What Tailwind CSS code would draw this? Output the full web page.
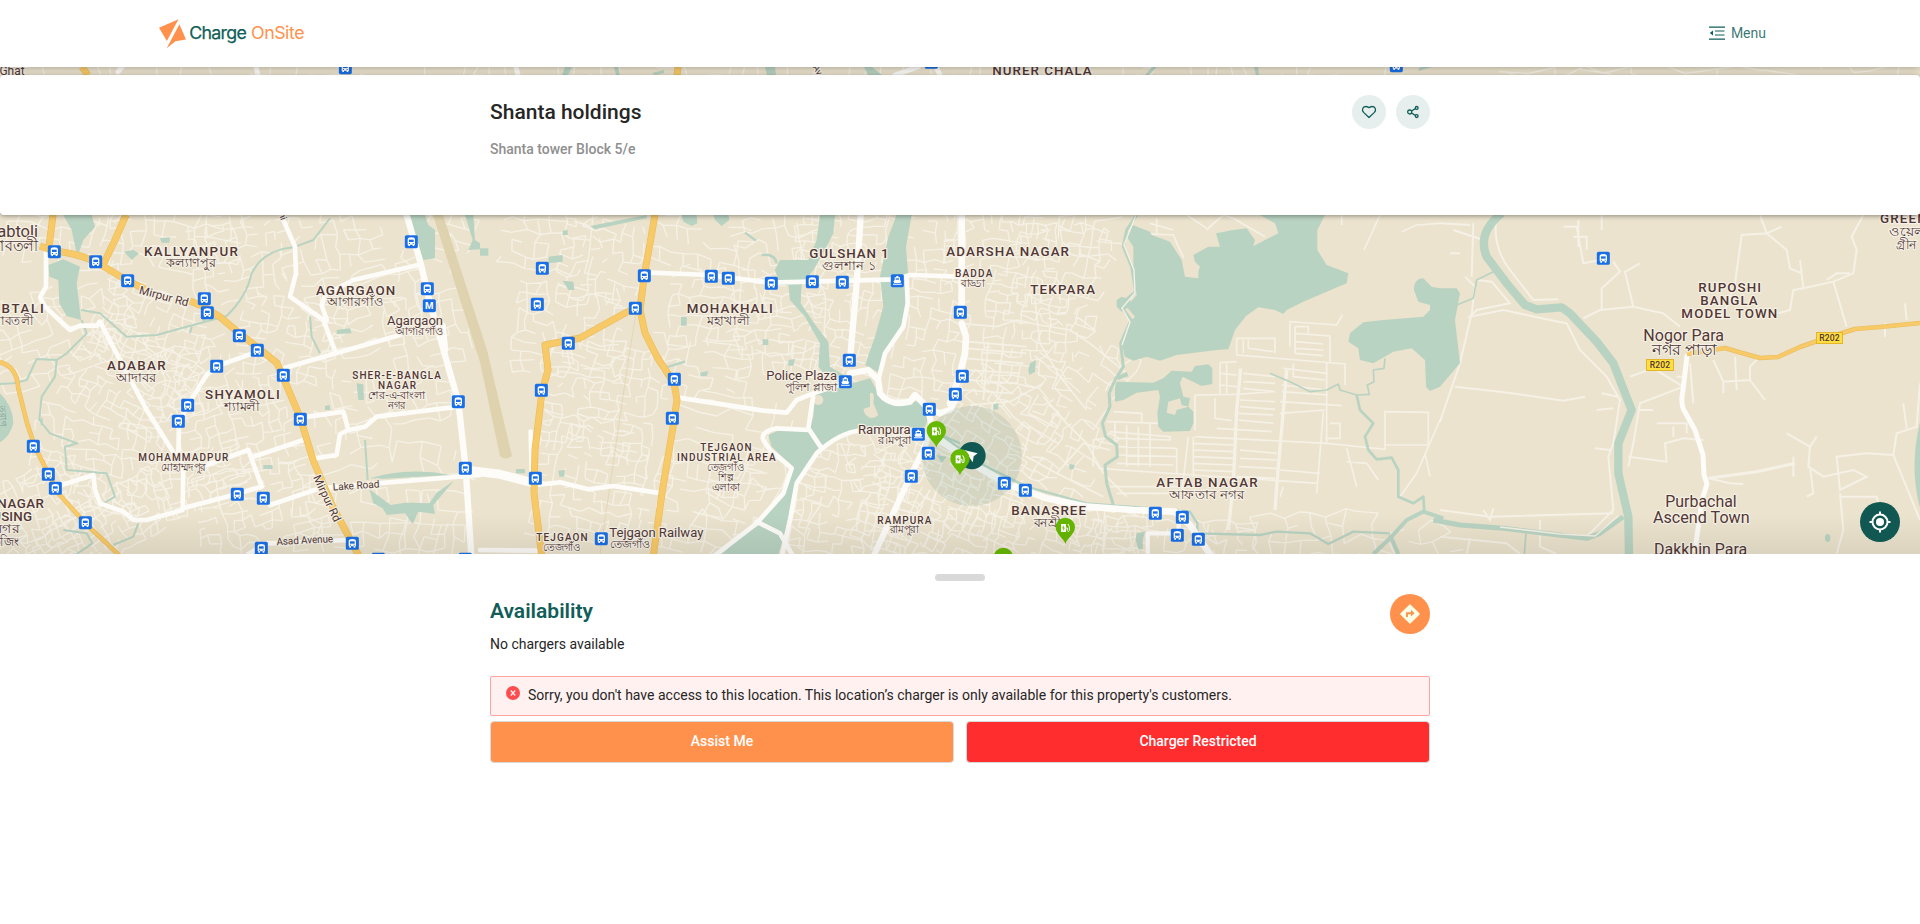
<!DOCTYPE html>
<html lang="en">
<head>
<meta charset="utf-8">
<title>Charge OnSite</title>
<script src="https://cdn.jsdelivr.net/npm/@tailwindcss/browser@4"></script>
</head>
<body class="flex h-screen flex-col overflow-hidden bg-white font-['Roboto',sans-serif] text-sm text-[#262626]">

<header class="relative z-20 flex h-[67px] shrink-0 items-center justify-between bg-white pr-[154px] pb-0.5 pl-[159px] shadow-[0_1px_8px_rgba(0,0,0,0.3)]">
  <svg class="h-8 w-[150px]" viewBox="0 0 150 32">
    <path d="M0 10.7 19.5 2.200 7.900 24Z M20.400 7.200 27 22.600 16.500 24.200 7.700 31.200Z" fill="#ff914d"/>
    <g font-family="Inter,sans-serif" font-size="17.8">
      <text x="30.3" y="21.8" textLength="57.5" fill="#115e59" stroke="#115e59" stroke-width=".25">Charge</text>
      <text x="92" y="21.8" textLength="53.5" fill="#ff914d">OnSite</text>
    </g>
  </svg>
  <nav class="flex items-center gap-[6px] text-[#115e59]">
    <svg class="h-4 w-4" viewBox="0 0 16 16" fill="none" stroke="currentColor" stroke-width="1.2"><path d="M0 2.200h16M6 6h9.500M6 10h9.500M0 14.200h16"/><path d="M4 5.500v5L.8 8Z" fill="currentColor" stroke="none"/></svg>
    <span class="text-sm text-[#115e59]/85">Menu</span>
  </nav>
</header>

<main class="relative h-[487px] shrink-0 overflow-hidden bg-[#ebe3cd] pt-2">
  <svg class="absolute inset-0 h-[487px] w-[1920px]" viewBox="0 67 1920 487" font-family="Roboto,'Noto Sans',sans-serif">
    <defs>
      <g id="box"><rect x="-19.5" y="-19.5" width="39" height="39" rx="5" fill="#1a6fe6"/></g>
      <g id="bus"><use href="#box"/><path d="M-11 -6Q-11 -13 0 -13Q11 -13 11 -6V9H9V13H4V9H-4V13H-9V9H-11Z" fill="#fff"/><path d="M-7 -6H7V1H-7Z" fill="#1a6fe6"/><path d="M-7 4h3v3h-3zM4 4h3v3h-3z" fill="#1a6fe6"/></g>
      <g id="boat"><use href="#box"/><path d="M-3 -14H3V-10H8V-1L12 1L9 7H-9L-12 1L-8 -1V-10H-3ZM-13 9H13V12H-13Z" fill="#fff"/><path d="M-5 -7H5V-3H-5Z" fill="#1a6fe6"/></g>
      <g id="pin"><path d="M0 0C-5 -17 -29 -30 -29 -50A29 29 0 0 1 29 -50C29 -30 5 -17 0 0Z" fill="#66b800"/><path d="M-13 -60H2V-36H-13Z" fill="#fff"/><path d="M2 -48H6V-40Q9 -34 12 -40V-52L8 -60" fill="none" stroke="#fff" stroke-width="3"/><path d="M-4 -56l-6 9h4l-1 7 6-9h-4z" fill="#66b800"/></g>
      <linearGradient id="fade" x1="0" x2="0" y1="0" y2="1"><stop offset="0" stop-color="#000" stop-opacity="0"/><stop offset="1" stop-color="#000" stop-opacity=".07"/></linearGradient>
    </defs>

    <path id="streets" fill="none" stroke="#f5f1e6" stroke-width="1.35" stroke-linejoin="round"/>
    <g fill="none" stroke="#f5f1e6" stroke-width="5" transform="translate(960 210) scale(.33333)">
      <path d="M830 385H945V430M830 385V435L1155 462V525M850 390V430M865 390V415L940 425M990 410V335L1130 345L1147 315M1005 350H1045V370M1005 370L1110 378V455M1005 350V430M1005 395L1090 402M1005 415L1090 420M1005 430L1090 437M780 458L830 455M780 458V550M800 460V550M705 555L830 553L940 545M780 490L830 495M780 525L830 530M850 490L945 500M850 515L945 520M850 535L945 545M1000 460V500L1095 510M970 475L1100 490M965 525L1100 540M965 545L1105 555M960 575L1145 587M960 610L1095 600M1100 455V700M1090 605L1070 850M1110 640H1140V685H1095M840 570L945 575M840 590L945 598M835 610L940 615M835 630L940 640M770 655L935 665M705 680L1100 700L1275 718V605L1405 607V705H1275M705 555V660M765 565V625L815 632M700 700L820 705M700 720L820 725M700 740L820 745M700 760L820 765M700 780L820 785M700 680V800M840 720L950 730M840 745L950 750M835 770L950 775M830 800L945 805M460 605L545 610V635M440 635L600 640M450 665L630 680V690L470 685M475 710L650 715M475 735L650 740M470 760L640 765M465 640V700M500 645V770M535 650V770M570 640V770M415 775L700 795L1075 820M650 715V790M685 680L665 850M1160 715L1190 830M1160 755L1220 760L1255 810M1440 630L1370 790L1320 860M1395 730L1410 800M440 800L500 860M450 830H700M470 850H690M970 830L960 860M960 780L1080 790"/>
      <path stroke-width="10" d="M842 475L830 600L820 820L805 960M980 480L970 600L950 830L945 900"/>
      <path d="M20 395L200 410M20 415L200 430M20 445L190 460M20 480L180 490M20 510L170 520M10 540L160 550M85 395L70 570M130 400L110 560M0 340L110 350L170 330L240 345M30 585L150 575L250 520M225 270L240 400L300 500L380 600M240 345L330 360L390 400L500 490M120 570L160 620L210 660L190 740M250 560L320 640L380 700L430 790M200 740L290 790L430 860M290 790L370 700L450 720M430 685L400 690V770M740 60Q760 40 790 15L820 25L915 80M1145 15V45M1260 15L1212 120M1325 65L1370 45L1440 40"/>
      <path d="M535 70L640 75L655 110L672 145M570 40L640 60M590 25V70M680 15L740 55"/>
    </g>
    <g fill="none" stroke="#f5f1e6" stroke-width="6" transform="translate(1440 210) scale(.33333)">
      <path d="M170 15Q155 110 210 180L280 270L355 268M75 200L105 230L95 310L60 460L0 635M45 530L180 545L370 572L435 560M110 210L155 215L210 280L110 300L90 320L190 300L330 330L380 340L420 420L500 500L540 570L520 700L505 740L520 900L440 980L300 965L180 950M0 900L150 920L520 910M470 600L520 595M465 715L510 720M485 550L535 560M370 50H410L430 160L480 150M400 80H440V120M415 30V110M485 15V60M520 155L540 185L485 235V300M600 160L555 185L580 290L480 300L430 325M580 290L670 310L720 350M570 500L640 475L730 530L600 580L580 700L565 770M600 600H640M650 640H740V670M565 740L680 755L675 700L730 685L790 690M700 650V680M750 460L760 580M710 500H740M960 15L980 70L905 75L885 220L845 330M980 70L1040 120L1050 175L1085 190L1090 235L1060 240L1050 300L1015 310M980 70L1025 50M1090 235L1180 215L1240 190L1250 120L1235 80L1270 15M1180 215L1220 350M1160 210L1190 190H1230M1080 150L1085 190M820 450L850 515L930 510L930 470L960 440M850 515V550M885 440L890 540M930 510L975 570M1395 280L1400 330M1335 340V380M1040 670L1110 710L1130 680M1110 710L1105 770L1150 800L1240 780L1280 800L1200 840L1190 740L1280 730L1360 735L1440 930M1360 735L1370 670L1430 650L1440 520M1390 580L1400 655M1200 850L1210 960L1190 1032M1110 770L1120 850L1100 860M1200 860L1310 860L1340 980M805 805L870 820L910 822M1060 740V800"/>
      <path stroke-width="9" d="M805 805L950 785L1065 760"/>
      <path d="M0 40L90 45M40 60L130 90M100 40L95 200M30 130H60M0 980L200 1000L240 1032M130 900L150 930L160 895M90 985L80 1032M300 930V1010L350 1032"/>
    </g>

    <!-- runway and rail line -->
    <path d="M433 215H443L487 350L512 456Q505 461 500 456L480 362Z" fill="#dfd2ae"/>
    <path d="M652 215L628 362L600 554" fill="none" stroke="#dfd2ae" stroke-opacity=".7"/>

    <g fill="#b9d3c2" stroke="none">
      <g transform="translate(0 210) scale(.33333)">
        <path d="M190 15H275L285 50L250 90L232 140L215 60ZM145 165L190 148L240 170L230 220L243 330L200 318L178 280L175 210L148 200ZM372 125L400 120L417 130L395 150ZM480 85L510 82L508 98H485ZM1225 15H1275L1285 45L1305 60V145L1270 150L1250 90ZM1395 15H1420L1425 90L1440 100V118L1405 120L1418 90ZM0 550Q40 590 40 640Q30 680 0 697ZM1070 520L1090 523L1092 570H1075ZM1110 805Q1220 770 1352 795L1150 806ZM1108 838L1172 885L1215 878H1240L1288 880L1310 848L1362 812L1300 885L1305 912L1255 905L1238 942L1215 910L1160 915L1148 895L1120 880ZM790 765H818V777H790ZM1010 360L1050 355L1055 370L1010 372ZM975 588L990 585V600H975ZM600 320L625 325L610 335Z"/>
        <g fill="none" stroke="#b9d3c2" stroke-width="6" stroke-linejoin="round">
          <path d="M243 300L300 310L340 345L380 380L470 375L560 350L680 318Q740 260 755 190Q790 120 880 112L940 90L990 25M245 330L260 370L200 430L170 450L110 447L80 510L40 520L0 522M170 450L165 500L125 560L118 630L150 670L232 700L195 710L200 780L320 790L345 860L310 880M930 320L935 380L960 430M415 940L400 980L340 1005M190 960L260 970L277 1000L230 1032M1095 690L1103 810M575 350L570 370M125 625V645"/>
        </g>
      </g>
      <g transform="translate(480 210) scale(.33333)">
        <path d="M1020 15H1065L1060 70L1035 120L1000 180L965 225L962 280L1010 350L1045 395L1050 470L1100 500L1040 500L1015 470L1020 400L975 320L930 270L925 225H900L885 180L900 150L985 150L1010 90ZM1250 15H1295L1278 110L1285 200L1280 320L1230 400L1200 490L1155 465L1185 380L1210 290L1200 200L1225 80Z"/>
        <path d="M1005 550L1100 525L1170 505L1190 540L1230 580L1290 580L1320 570L1350 610L1335 650L1110 660L1030 710L965 800L940 860L915 970L895 1032H725L830 935L900 860L940 770L875 710L865 675L900 660L985 665L1000 620Z"/>
        <path d="M605 15H650L652 40L635 48L610 35ZM700 15H745L748 30L725 48L705 30ZM205 140L248 135V155L205 160ZM248 212L280 215L283 240H265ZM0 115H25V137H0ZM248 62L263 60V75H248ZM603 320H620V347H603ZM848 388H865V405H848ZM660 488L685 483L680 498H662ZM925 450L945 447L940 467H925ZM108 777H135V790H108ZM235 782L255 780L252 800H238ZM1370 735L1400 740L1385 758ZM330 48L500 15V25L345 58Z"/>
        <path d="M845 135Q885 130 890 160M795 68L828 92M558 472L615 455M1350 660L1440 700" fill="none" stroke="#b9d3c2" stroke-width="7"/>
        <path d="M1170 550Q1185 540 1180 580L1195 615Q1175 635 1155 612L1150 597L1170 590Z" fill="#ebe3cd"/>
        <circle cx="1015" cy="570" r="15" fill="#ebe3cd"/>
      </g>
      <g transform="translate(960 210) scale(.33333)">
        <path d="M518 45L570 65L575 75L630 95L665 150L675 200L715 205L715 185L720 170L705 155L700 135L745 110L780 110L768 70L820 60L860 55L885 90L880 108L955 70L945 40L900 15H1095L1072 60V120L1100 165L1165 190L1160 220L1030 275L980 300L970 312L945 300L895 292L858 318L825 360L805 418L770 420L650 435L600 452L560 440L520 452L495 440L485 400L505 340L525 320L500 290L530 255L520 180L520 110L500 80Z"/>
        <path d="M470 270L485 260L510 268L515 285L485 305L470 290ZM465 530L470 515L580 518L610 505L635 482L695 485L705 468L745 463L757 475V522L725 528L668 500L660 520L670 560L690 565L685 590L700 605V640L690 663L610 665L595 650L592 610L600 560L595 540L530 548L490 570L465 575ZM470 500L500 485L505 498L475 510Z"/>
        <path d="M625 575L660 565L665 585L685 590L650 600L645 615L620 608Z" fill="#ebe3cd"/>
        <path d="M1362 240Q1362 205 1390 205L1415 230L1440 235H1490L1500 250L1485 330L1500 460L1440 530L1410 543L1398 530L1395 450L1355 415L1300 425L1240 460L1200 450L1195 415L1165 395L1170 370L1210 337L1270 330L1390 320L1410 300V285L1375 275Z"/>
        <path d="M205 480L210 460L228 450L225 485L208 495ZM100 583L115 580V598L100 600ZM328 762L345 765L340 778H328ZM530 970L555 965L548 990V1018H535L527 990Z"/>
        <g fill="none" stroke="#b9d3c2" stroke-linejoin="round">
          <path stroke-width="9" d="M530 15L500 60L490 110L515 170L527 245L480 285L513 330L482 400L490 470L465 510L447 550L450 590L427 640L437 680L470 705L472 740L435 765L440 820L460 885"/>
          <path stroke-width="7" d="M-70 665L60 760L200 830L380 880L640 900L690 905L712 940V970L900 975L950 965L1050 970L1105 1002L1180 965L1290 970"/>
          <path stroke-width="12" d="M1240 1032L1290 985L1340 930L1390 905L1450 925M1290 975L1315 1032"/>
          <path stroke-width="8" d="M1190 555L1200 600L1240 640L1215 680L1225 720L1250 748L1295 743L1315 780L1315 860L1360 880L1390 860L1393 905"/>
          <path stroke-width="5" d="M1275 445L1272 475L1240 480L1242 515L1222 525L1228 553L1190 555L1140 540L1135 522L1100 540L1050 545L990 515L930 490"/>
        </g>
      </g>
      <g transform="translate(1440 210) scale(.33333)" fill="none" stroke="#b9d3c2" stroke-linejoin="round">
        <path stroke-width="25" d="M185 10Q110 70 140 140L200 220L255 285L290 298L365 292L390 310L470 395L520 460L575 600L535 700V790L565 920L567 1040"/>
        <path stroke-width="15" d="M-20 930L60 945L190 955L300 968L440 985L480 970L550 920"/>
        <path stroke-width="5" d="M160 185L110 210L100 265L50 285M258 970L253 1032"/>
        <path d="M1440 640Q1420 720 1425 800Q1430 870 1450 920Z" fill="#b9d3c2"/><ellipse cx="1163" cy="984" rx="8" ry="12" fill="#b9d3c2" stroke="none"/>
      </g>
      <path d="M565 67L572 67L568 75H562ZM614 67H618L620 75H616ZM652 73L664 70V73L655 75ZM765 67H775L776 75H767ZM864 67H872L882 75H868ZM1152 67H1157L1149 75H1145ZM1254 67H1258L1259 75H1256ZM1420 67H1432L1418 71Z"/>
    </g>
    <g stroke="#f5f1e6" fill="none" stroke-width="1.4"><path d="M1136 215L1124 245L1134 270L1135 293L1122 308L1130 322L1122 345M1500 527L1560 534L1595 536L1618 516"/></g>

    <!-- arterial roads -->
    <g fill="none" stroke="#fdfcf8" stroke-linejoin="round" stroke-linecap="round">
      <g transform="translate(0 210) scale(.33333)" stroke-width="14">
        <path d="M848 25L885 110L888 190L870 260L970 330L1008 430M1255 165L1060 210L975 255L965 285L980 330M850 475L1008 430L1200 375M138 120V230L120 262L135 290L210 360L240 347L290 347L300 335L360 450L440 600L525 735M765 428L660 465L620 495L560 590L537 640L535 740L550 770L548 900L440 930L400 930L370 905L300 880L285 840L280 795L185 825M548 895L680 860L785 830L745 720L620 765M760 740L910 690M910 622L1030 605L1045 660L1020 672L1010 735L945 745M1045 660L1095 650L1130 620L1375 590M810 885L960 835L1130 820L1440 795M745 1032L800 1000L1050 990M1330 345L1338 420"/>
        <path stroke-width="19" d="M1220 15L1262 160L1290 280L1325 400L1375 575L1397 775L1414 1040"/>
      </g>
      <g transform="translate(480 210) scale(.33333)" stroke-width="14">
        <path stroke-width="27" d="M-45 780L60 793L165 820"/>
        <path d="M165 825L240 817L325 838L400 828L545 850L535 890M152 665L155 780M510 188L690 195L870 218L1250 208L1290 195L1440 200M1195 510L1215 430L1270 350L1283 280L1280 205M595 563L850 602L920 608L950 570L1000 550L1090 520M1000 555L985 655L1025 715M985 660L890 655Q840 665 850 690L870 720L935 775L910 850L830 940L700 1040M1150 660Q1080 665 1010 730L950 820L930 930L905 1040M830 935L900 970L940 1040M0 1020L180 1022"/>
        <path stroke-width="19" d="M1142 15L1130 220L1110 450M1110 490L1165 480L1195 510L1200 550Q1230 590 1290 575L1305 555L1345 595L1380 610L1410 600L1440 540"/>
        <path stroke-width="18" d="M1345 600L1355 650L1330 720L1290 800L1180 1040"/>
      </g>
      <g transform="translate(960 210) scale(.33333)" stroke-width="20">
        <path d="M5 15V300M5 340L18 380L15 430L0 490L-30 580"/>
        <path d="M-90 660L-60 690L60 775L150 825L260 865L380 890L520 900L645 905L690 945L755 1040"/>
        <path stroke-width="13" d="M563 1040V970H640M660 905L655 960"/>
      </g>
      <path stroke-width="5" d="M1687 356L1683 390Q1680 405 1685 412L1695 430L1703 455L1704 475L1707 484L1702 500L1695 550"/>
      <path stroke-width="5" d="M118 72L122 67M256 67L258 75M516 67L518 75M895 75L918 67M936 67L940 75"/>
    </g>

    <!-- highways -->
    <g fill="none" stroke-linejoin="round">
      <g stroke="#e9bc62" stroke-width="7">
        <path d="M40 246L54 251Q77 253 96 262L128 281L145 289M190 301L202 306L220 317L239 333L257 347L277 363L283 377L300 417L313 460L333 507L360 558M126 215L115 240L103 265M53 215L49 247"/>
        <path d="M655 215L644 277L640 310L645 333L657 357L674 383L677 400L673 427L662 493L653 558M640 308L627 312L580 338L545 345L548 370L542 392L535 450L534 493L542 558"/>
        <path stroke-width="4.6" d="M0 362Q17 367 18 387L27 423L35 447L50 477L58 493L85 523L120 556M1687 354L1725 348L1742 353L1760 358L1778 357L1800 347L1820 340L1855 329L1880 327L1920 323"/>
        <path d="M678 67L677 75M82 67L88 75"/>
      </g>
      <g stroke="#f8c967" stroke-width="5.8">
        <path d="M40 246L54 251Q77 253 96 262L128 281L145 289M190 301L202 306L220 317L239 333L257 347L277 363L283 377L300 417L313 460L333 507L360 558M126 215L115 240L103 265M53 215L49 247"/>
        <path d="M655 215L644 277L640 310L645 333L657 357L674 383L677 400L673 427L662 493L653 558M640 308L627 312L580 338L545 345L548 370L542 392L535 450L534 493L542 558"/>
        <path stroke-width="3.4" d="M0 362Q17 367 18 387L27 423L35 447L50 477L58 493L85 523L120 556M1687 354L1725 348L1742 353L1760 358L1778 357L1800 347L1820 340L1855 329L1880 327L1920 323"/>
        <path d="M678 67L677 75M82 67L88 75"/>
      </g>
    </g>

    <circle cx="971.7" cy="456" r="50" fill="#115e59" fill-opacity=".1"/>

    <!-- place labels -->
    <g id="labels" fill="#523735" stroke="#f5f1e6" stroke-width="7" stroke-linejoin="round" paint-order="stroke" font-size="40" text-anchor="middle">
      <g transform="translate(0 210) scale(.33333)">
        <g font-weight="500">
          <text x="573" y="137" textLength="282">KALLYANPUR</text><text x="1067" y="255" textLength="238">AGARGAON</text><text x="409" y="479" textLength="176">ADABAR</text><text x="727" y="566" textLength="224">SHYAMOLI</text><text x="36" y="308" textLength="190">GABTALI</text><text x="62" y="893" textLength="140">NAGAR</text><text x="8" y="932" textLength="176">HOUSING</text>
          <g font-size="30"><text x="1190" y="508" textLength="266">SHER-E-BANGLA</text><text x="1191" y="538" textLength="114">NAGAR</text><text x="550" y="752" textLength="270">MOHAMMADPUR</text></g>
        </g>
        <g font-size="40"><text x="573" y="172" textLength="150">কল্যাণপুর</text><text x="1066" y="289" textLength="170">আগারগাঁও</text><text x="408" y="515" textLength="120">আদাবর</text><text x="726" y="602" textLength="108">শ্যামলী</text><text x="40" y="344" textLength="122">গাবতলী</text><text x="20" y="969" textLength="78">নগর</text><text x="2" y="1007" textLength="112">হাউজিং</text></g>
        <g font-size="34"><text x="1190" y="567" textLength="170">শের-এ-বাংলা</text><text x="1190" y="597" textLength="54">নগর</text><text x="550" y="782" textLength="136">মোহাম্মদপুর</text><text x="1257" y="376" textLength="144">আগারগাঁও</text></g>
        <text x="1245" y="344" font-size="39" textLength="168" lengthAdjust="spacingAndGlyphs">Agargaon</text>
        <text x="36" y="80" font-size="48" textLength="156" lengthAdjust="spacingAndGlyphs">Gabtoli</text><text x="45" y="124" font-size="48" textLength="140">গাবতলী</text>
        <text transform="translate(489 270) rotate(15)" font-size="34" textLength="152" lengthAdjust="spacingAndGlyphs">Mirpur Rd</text>
        <text transform="translate(971 870) rotate(65)" font-size="34" textLength="150" lengthAdjust="spacingAndGlyphs">Mirpur Rd</text>
        <text transform="translate(1069 837) rotate(-4)" font-size="31" textLength="140" lengthAdjust="spacingAndGlyphs">Lake Road</text>
        <text transform="translate(915 1001) rotate(-3)" font-size="31" textLength="170" lengthAdjust="spacingAndGlyphs">Asad Avenue</text>
        <text transform="translate(843 32) rotate(70)" font-size="28" text-anchor="end">ni</text>
        <text x="36" y="-404" font-size="36">Ghat</text>
        <text transform="translate(0 620) rotate(85)" font-size="26" fill="#7f9a90" stroke="none">তুরাগ</text>
      </g>
      <g transform="translate(480 210) scale(.33333)">
        <g font-weight="500">
          <text x="749" y="308" textLength="258">MOHAKHALI</text><text x="1107" y="143" textLength="238">GULSHAN 1</text><text x="1583" y="137" textLength="368">ADARSHA NAGAR</text>
          <g font-size="30"><text x="738" y="724" textLength="154">TEJGAON</text><text x="739" y="754" textLength="296">INDUSTRIAL AREA</text><text x="246" y="994" textLength="154">TEJGAON</text><text x="1273" y="941" textLength="162">RAMPURA</text><text x="1481" y="202" textLength="112">BADDA</text></g>
        </g>
        <g font-size="40"><text x="746" y="344" textLength="130">মহাখালী</text><text x="1107" y="179" textLength="160">গুলশান ১</text></g>
        <g font-size="34"><text x="737" y="783" textLength="110">তেজগাঁও</text><text x="737" y="813" textLength="46">শিল্প</text><text x="738" y="843" textLength="84">এলাকা</text><text x="246" y="1024" textLength="112">তেজগাঁও</text><text x="449" y="1015" textLength="120">তেজগাঁও</text><text x="1273" y="970" textLength="88">রামপুরা</text><text x="1478" y="230" textLength="70">বাড্ডা</text><text x="993" y="544" textLength="156">পুলিশ প্লাজা</text><text x="1244" y="703" textLength="98">রামপুরা</text></g>
        <g font-size="39"><text x="965" y="511" textLength="212" lengthAdjust="spacingAndGlyphs">Police Plaza</text><text x="1213" y="671" textLength="158" lengthAdjust="spacingAndGlyphs">Rampura</text><text x="529" y="982" textLength="282" lengthAdjust="spacingAndGlyphs">Tejgaon Railway</text></g>
        <text transform="translate(1005 -416) rotate(60)" font-size="28">Av</text>
      </g>
      <g transform="translate(960 210) scale(.33333)">
        <g font-weight="500"><text x="308" y="251" textLength="194">TEKPARA</text><text x="741" y="831" textLength="304">AFTAB NAGAR</text><text x="266" y="914" textLength="224">BANASREE</text><text x="246" y="-404" textLength="298">NURER CHALA</text></g>
        <g font-size="40"><text x="740" y="867" textLength="226">আফতাব নগর</text><text x="262" y="950" textLength="82">বনশ্রী</text></g>
      </g>
      <g transform="translate(1440 210) scale(.33333)">
        <g font-weight="500"><text x="869" y="246" textLength="188">RUPOSHI</text><text x="867" y="284" textLength="172">BANGLA</text><text x="868" y="323" textLength="288">MODEL TOWN</text><text x="1390" y="40" textLength="140">GREEN</text></g>
        <text x="1402" y="79" font-size="40" textLength="108">ওয়েল</text><text x="1400" y="117" font-size="40" textLength="62">গ্রীন</text>
        <g font-size="48"><text x="731" y="392" textLength="242" lengthAdjust="spacingAndGlyphs">Nogor Para</text><text x="783" y="890" textLength="214" lengthAdjust="spacingAndGlyphs">Purbachal</text><text x="784" y="938" textLength="290" lengthAdjust="spacingAndGlyphs">Ascend Town</text><text x="782" y="1034" textLength="280" lengthAdjust="spacingAndGlyphs">Dakkhin Para</text></g>
        <text x="733" y="436" font-size="48" textLength="196">নগর পাড়া</text>
      </g>
    </g>
    <g font-size="8.6" font-weight="500" text-anchor="middle" fill="#523735">
      <rect x="1646.5" y="359.5" width="27" height="11" fill="#ffdf3f" stroke="#e3b52f"/><text x="1660" y="368.2" textLength="20.5">R202</text>
      <rect x="1816.5" y="332.5" width="26" height="11" fill="#ffdf3f" stroke="#e3b52f"/><text x="1829.5" y="341.2" textLength="20.5">R202</text>
    </g>

    <!-- transit stops -->
    <g transform="translate(0 210) scale(.33333)">
      <use href="#bus" x="163" y="125"/><use href="#bus" x="287" y="155"/><use href="#bus" x="383" y="212"/><use href="#bus" x="613" y="266"/><use href="#bus" x="622" y="308"/><use href="#bus" x="718" y="377"/><use href="#bus" x="772" y="421"/><use href="#bus" x="650" y="469"/><use href="#bus" x="850" y="496"/><use href="#bus" x="563" y="586"/><use href="#bus" x="535" y="634"/><use href="#bus" x="901" y="628"/><use href="#bus" x="100" y="709"/><use href="#bus" x="145" y="793"/><use href="#bus" x="166" y="835"/><use href="#bus" x="256" y="938"/><use href="#bus" x="712" y="853"/><use href="#bus" x="790" y="865"/><use href="#bus" x="784" y="1015"/><use href="#bus" x="1057" y="1000"/><use href="#bus" x="1234" y="95"/><use href="#bus" x="1282" y="236"/><use href="#bus" x="1375" y="575"/><use href="#bus" x="1396" y="775"/><use href="#bus" x="1135" y="1048"/><use href="#bus" x="1396" y="1048"/><use href="#bus" x="1036" y="-427"/>
      <use href="#box" x="1288" y="287"/><text x="1288" y="298" font-size="29" font-weight="700" fill="#fff" text-anchor="middle">M</text>
    </g>
    <g transform="translate(480 210) scale(.33333)">
      <use href="#bus" x="187" y="175"/><use href="#bus" x="172" y="283"/><use href="#bus" x="493" y="197"/><use href="#bus" x="466" y="295"/><use href="#bus" x="265" y="400"/><use href="#bus" x="184" y="541"/><use href="#bus" x="166" y="805"/><use href="#bus" x="583" y="508"/><use href="#bus" x="577" y="625"/><use href="#bus" x="694" y="199"/><use href="#bus" x="745" y="205"/><use href="#bus" x="874" y="220"/><use href="#bus" x="997" y="215"/><use href="#bus" x="1087" y="217"/><use href="#bus" x="1108" y="451"/><use href="#bus" x="1348" y="598"/><use href="#bus" x="1345" y="730"/><use href="#bus" x="1294" y="799"/><use href="#bus" x="364" y="986"/><use href="#bus" x="1441" y="307"/><use href="#bus" x="1447" y="499"/><use href="#bus" x="1426" y="553"/><use href="#bus" x="1354" y="-443"/>
      <use href="#boat" x="1252" y="212"/><use href="#boat" x="1096" y="515"/><use href="#boat" x="1315" y="673"/>
    </g>
    <g transform="translate(960 210) scale(.33333)">
      <use href="#bus" x="133" y="820"/><use href="#bus" x="196" y="841"/><use href="#bus" x="586" y="910"/><use href="#bus" x="667" y="922"/><use href="#bus" x="652" y="976"/><use href="#bus" x="715" y="988"/><use href="#bus" x="1930" y="145"/><use href="#bus" x="1309" y="-433"/>
      <circle cx="36" cy="737" r="41" fill="#115852"/><path d="M12 720L53 730L41 739L38 757L28 742Z" fill="#fff"/>
      <use href="#pin" x="-71" y="712"/><use href="#pin" x="0" y="796"/><use href="#pin" x="316" y="1002"/><use href="#pin" x="130" y="1092"/>
    </g>
    <rect x="0" y="514" width="1920" height="40" fill="url(#fade)"/>
  </svg>

  <section class="relative z-10 h-[140px] rounded-[4px] bg-white shadow-[0_1px_5px_rgba(0,0,0,0.4)]">
    <div class="mx-auto flex w-[940px] items-start justify-between pt-[20px]">
      <div class="pt-px">
        <h1 class="text-[21px] leading-8 font-medium whitespace-nowrap text-[#262626]">Shanta holdings</h1>
        <p class="mt-[10px] text-sm leading-[22px] font-medium text-[#8f8f8f]">Shanta tower Block 5/e</p>
      </div>
      <div class="flex gap-[10px] text-[#115e59]">
        <button class="flex size-[34px] items-center justify-center rounded-full bg-[#e7efee]"><svg class="size-4" viewBox="0 0 16 16" fill="none" stroke="currentColor" stroke-width="1.3" stroke-linejoin="round"><path d="M8 13.5 2.6 8.4C.4 6 1.6 2.6 4.6 2.5 6.1 2.4 7.2 3.2 8 3.600 8.800 3.200 9.900 2.400 11.400 2.500 14.400 2.600 15.600 6 13.400 8.400Z"/></svg></button>
        <button class="flex size-[34px] items-center justify-center rounded-full bg-[#e7efee]"><svg class="size-[14px]" viewBox="0 0 14 14" fill="none" stroke="currentColor" stroke-width="1.3"><circle cx="3.700" cy="7" r="2"/><circle cx="10.700" cy="2.900" r="1.400"/><circle cx="10.700" cy="11.100" r="1.400"/><path d="M5.500 6 9.400 3.600M5.500 8 9.400 10.400"/></svg></button>
      </div>
    </div>
  </section>

  <button class="absolute right-5 bottom-3 z-10 flex size-10 items-center justify-center rounded-full bg-[#115852]">
    <svg class="size-6" viewBox="0 0 24 24" fill="none" stroke="#fff" stroke-width="2"><circle cx="12" cy="12" r="7.500"/><path d="M12 1.500v3.500M12 19v3.500M1.500 12H5M19 12h3.500"/><circle cx="12" cy="12" r="4" fill="#fff" stroke="none"/></svg>
  </button>
</main>

<section class="relative flex-1 bg-white">
  <div class="mx-auto w-[940px] pt-5">
    <div class="mx-auto h-[7px] w-[50px] rounded-full bg-[#d9d9d9]"></div>
    <div class="mt-[13px] flex items-start justify-between">
      <div>
        <h2 class="text-[21px] leading-[34px] font-semibold whitespace-nowrap text-[#115e59]">Availability</h2>
        <p class="mt-[5px] text-sm leading-[22px]">No chargers available</p>
      </div>
      <button class="flex size-10 items-center justify-center rounded-full bg-[#ff914d]">
        <svg class="size-5" viewBox="0 0 20 20"><path d="M10 .8 19.200 10 10 19.200.8 10Z" fill="#f8ffe6" stroke="#f8ffe6" stroke-width="1.200" stroke-linejoin="round"/><path d="M7 13V9.200H12" fill="none" stroke="#ff914d" stroke-width="1.900"/><path d="M11 5.800 14.500 9.200 11 12.500Z" fill="#ff914d"/></svg>
      </button>
    </div>
    <div class="mt-[21px] flex h-10 items-center rounded-[2px] border border-[#ffa39e] bg-[#fff1f0] pb-0.5 pl-[15px]">
      <svg class="mb-[5px] size-[14px] shrink-0" viewBox="0 0 14 14"><circle cx="7" cy="7" r="7" fill="#ff4d4f"/><path d="M4.800 4.500 9.200 9.500M9.200 4.500 4.800 9.500" stroke="#fff1f0" stroke-width="1.300"/></svg>
      <p class="ml-2 text-sm whitespace-nowrap">Sorry, you don't have access to this location. This location’s charger is only available for this property's customers.</p>
    </div>
    <div class="mt-[5px] grid grid-cols-2 gap-3 text-sm font-medium text-white">
      <button class="h-[42px] rounded-[4px] border border-[#d9d9d9] bg-[#ff914d] pb-0.5">Assist Me</button>
      <button class="h-[42px] rounded-[4px] border border-[#d9d9d9] bg-[#ff2d2d] pb-0.5">Charger Restricted</button>
    </div>
  </div>
</section>

<script>
  // Bengali letters join along a headline, so stretch the glyphs instead of the gaps
  for (const t of document.querySelectorAll('#labels text'))
    if (/[\u0980-\u09ff]/.test(t.textContent)) t.setAttribute('lengthAdjust', 'spacingAndGlyphs');

  // Residential streets: [centre x, centre y, width, height, angle, spacing]
  const blocks = [
    [60,235,110,60,8,11],[60,330,150,90,-20,12],[170,235,140,70,5,11],[235,260,90,80,-12,10],[150,330,110,80,20,9],
    [130,380,120,90,28,8],[90,460,120,90,12,9],[40,510,110,80,-25,8],[190,380,90,70,-18,10],[235,430,110,90,-14,9],
    [200,480,90,60,-16,8],[260,510,130,80,-14,9],[330,240,100,60,-10,11],[370,310,120,80,-14,12],[430,330,80,70,-12,11],
    [390,400,120,50,-8,12],[340,440,100,60,-10,14],[370,520,150,60,0,14],[100,530,150,60,-30,8],[440,240,60,60,15,12],
    [290,340,100,80,10,9],[430,500,80,110,3,15],
    [550,240,100,60,6,12],[600,260,80,80,8,10],[570,330,110,90,5,10],[600,400,110,110,8,9],[590,480,110,120,8,10],
    [700,245,100,50,12,12],[780,245,90,60,-10,12],[730,310,120,80,4,10],[780,330,90,90,-5,11],[700,370,100,60,8,12],
    [730,440,110,90,8,17],[700,510,120,90,10,13],[760,500,110,90,20,14],[840,330,80,110,14,9],[840,240,90,60,2,9],
    [920,250,70,80,3,10],[930,350,70,100,6,10],[850,500,110,110,8,9],[920,500,100,120,22,9],[880,450,70,60,-20,10],
    [1000,240,110,90,2,9],[1050,270,110,100,10,10],[1030,340,90,90,4,9],[1080,370,90,80,35,11],[1000,430,110,90,33,9],
    [1060,450,90,80,30,11],[960,520,120,90,20,9],[1040,530,130,60,22,9],[1110,530,80,50,5,9],[1180,540,150,40,2,10],
    [1090,230,60,50,5,13],[1300,535,180,40,-3,15],[1400,545,130,30,-10,15],
    [400,71,800,14,0,14],[1100,71,600,14,0,13],[1700,71,400,10,0,26]
  ];
  let seed = 7;
  const rnd = () => (seed = (seed * 16807) % 2147483647) / 2147483647;
  let d = '';
  for (const [cx, cy, w, h, a, s] of blocks) {
    const c = Math.cos(a * Math.PI / 180), n = Math.sin(a * Math.PI / 180);
    const cols = Math.round(w / s), rows = Math.max(1, Math.round(h / s));
    const pts = [];
    for (let j = 0; j <= rows; j++) for (let i = 0; i <= cols; i++) {
      const x = (i / cols - .5) * w + (rnd() - .5) * s * .6, y = (j / rows - .5) * h + (rnd() - .5) * s * .6;
      pts.push([(cx + x * c - y * n).toFixed(1), (cy + x * n + y * c).toFixed(1)]);
    }
    const at = (i, j) => pts[j * (cols + 1) + i];
    for (let j = 0; j <= rows; j++) for (let i = 0; i <= cols; i++) {
      if (i < cols && rnd() > .38) d += 'M' + at(i, j) + 'L' + at(i + 1, j);
      if (j < rows && rnd() > .48) d += 'M' + at(i, j) + 'L' + at(i, j + 1);
    }
  }
  document.getElementById('streets').setAttribute('d', d);
</script>
</body>
</html>
